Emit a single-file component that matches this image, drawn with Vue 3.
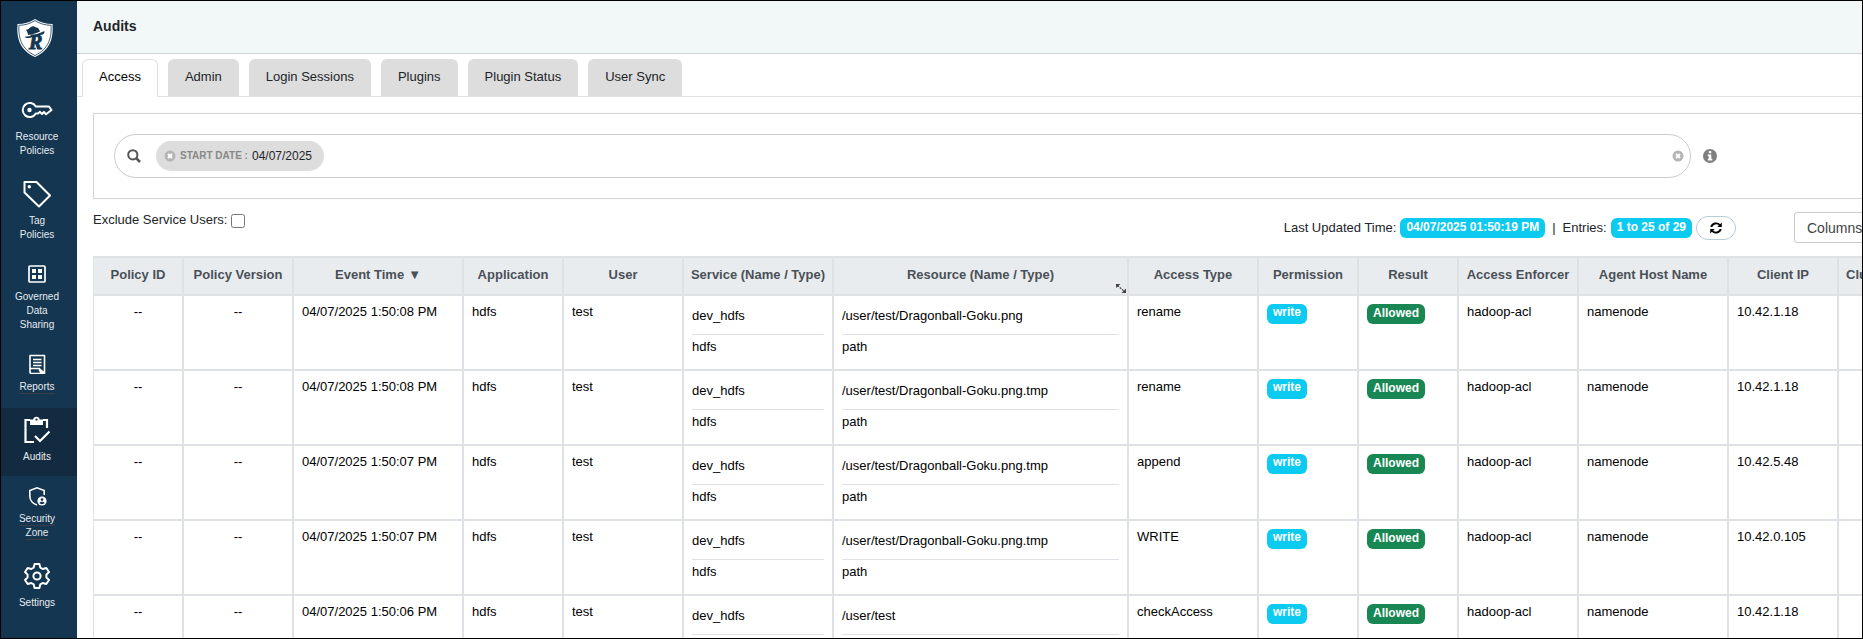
<script setup>
import { ref } from 'vue'

const tabs = ['Access', 'Admin', 'Login Sessions', 'Plugins', 'Plugin Status', 'User Sync']
const activeTab = ref('Access')
const excludeUsers = ref(false)
const query = ref('')

const nav = [
  { icon: 'key', lines: ['Resource', 'Policies'] },
  { icon: 'tag', lines: ['Tag', 'Policies'] },
  { icon: 'grid', lines: ['Governed', 'Data', 'Sharing'] },
  { icon: 'report', lines: ['Reports'], marked: true },
  { icon: 'audit', lines: ['Audits'], active: true },
  { icon: 'shield', lines: ['Security', 'Zone'], marked: true },
  { icon: 'gear', lines: ['Settings'] }
]

const columns = [
  { label: 'Policy ID', width: 90 },
  { label: 'Policy Version', width: 110 },
  { label: 'Event Time', width: 170, sorted: true },
  { label: 'Application', width: 100 },
  { label: 'User', width: 120 },
  { label: 'Service (Name / Type)', width: 150 },
  { label: 'Resource (Name / Type)', width: 295, resizing: true },
  { label: 'Access Type', width: 130 },
  { label: 'Permission', width: 100 },
  { label: 'Result', width: 100 },
  { label: 'Access Enforcer', width: 120 },
  { label: 'Agent Host Name', width: 150 },
  { label: 'Client IP', width: 110 },
  { label: 'Cluster Name', width: 100 }
]

const rows = [
  { time: '04/07/2025 1:50:08 PM', resource: '/user/test/Dragonball-Goku.png', access: 'rename', ip: '10.42.1.18' },
  { time: '04/07/2025 1:50:08 PM', resource: '/user/test/Dragonball-Goku.png.tmp', access: 'rename', ip: '10.42.1.18' },
  { time: '04/07/2025 1:50:07 PM', resource: '/user/test/Dragonball-Goku.png.tmp', access: 'append', ip: '10.42.5.48' },
  { time: '04/07/2025 1:50:07 PM', resource: '/user/test/Dragonball-Goku.png.tmp', access: 'WRITE', ip: '10.42.0.105' },
  { time: '04/07/2025 1:50:06 PM', resource: '/user/test', access: 'checkAccess', ip: '10.42.1.18' }
]
</script>

<template>
  <div class="app">
    <aside class="sidebar">
      <a class="logo" href="#" aria-label="Ranger">
        <svg width="38" height="40" viewBox="0 0 38 40">
          <path d="M19 1C14 4.500 8 6 1.500 6C0.500 21 4 32 19 39C34 32 37.500 21 36.500 6C30 6 24 4.500 19 1Z" fill="#fff" />
          <path d="M19 2.600C14 5.800 9 7.200 2.900 7.300C2.300 20.500 5.500 30.800 19 37.500C32.500 30.800 35.700 20.500 35.100 7.300C29 7.200 24 5.800 19 2.600Z" fill="none" stroke="#143651" stroke-width=".8" />
          <path d="M9 18.500C14 18.500 21 16.500 28.500 13C28.700 15.500 27.500 16.500 25.500 16.800C21 17.200 15 20.500 11 20C9.500 19.800 9 19.200 9 18.500ZM12 17C11.500 14 11 12.500 9.500 11.800C13 11.800 13.500 9 16.500 8.200C18.500 7.800 19.500 9.300 21 9.600C23 10.200 23.300 12 24 13.600C20 15.600 16.500 16.700 12 17Z" fill="#143651" />
          <text x="13" y="31" class="logo-letter">R</text>
        </svg>
      </a>
      <nav class="nav">
        <a v-for="item in nav" :key="item.icon" href="#" class="nav-item" :class="{ active: item.active }">
          <svg v-if="item.icon === 'key'" width="32" height="28" viewBox="0 0 32 28" fill="none" stroke="#fff" stroke-width="2" stroke-linejoin="round">
            <path d="M14.800 10.500A7 7 0 1 0 14.800 17.500H17L19 15.800L21 18L23 16L25 18.300L27.300 16.500L30.500 14L28 10.500Z" />
            <circle cx="8.500" cy="14" r="2.200" fill="#fff" stroke="none" />
          </svg>
          <svg v-else-if="item.icon === 'tag'" width="28" height="28" viewBox="0 0 28 28" fill="none" stroke="#fff" stroke-width="2" stroke-linejoin="round">
            <path d="M1.500 2H13.500L27 15.500L16 26.500L1.500 12.500Z" />
            <circle cx="6.300" cy="6.700" r="1.700" fill="#fff" stroke="none" />
          </svg>
          <svg v-else-if="item.icon === 'grid'" width="20" height="20" viewBox="0 0 20 20">
            <rect x="2" y="2" width="16" height="16" rx="1" fill="none" stroke="#fff" stroke-width="1.700" />
            <path d="M5 5h4v4H5zM11 5h4v4h-4zM5 11h4v4H5zM11 11h4v4h-4z" fill="#fff" />
          </svg>
          <svg v-else-if="item.icon === 'report'" width="20" height="20" viewBox="0 0 20 20" fill="none" stroke="#fff" stroke-width="1.600" stroke-linejoin="round">
            <path d="M3 1.500H17.500V19.500H4.500Q3 19.500 3 18ZM3 14.500H12.500V16Q13.500 19.500 17.300 19M12 14.500L17 18.500" />
            <path d="M6 5.500H14.500M6 8.500H14.500M6 11.500H14.500" />
          </svg>
          <svg v-else-if="item.icon === 'audit'" width="28" height="28" viewBox="0 0 28 28" fill="none" stroke="#fff" stroke-width="2.200">
            <path d="M11 26H2.500V4H7M20 4H24V12" />
            <path d="M12 20L17 25L26.500 15.500" />
            <path d="M7 3.500H10.200A3.300 3.300 0 0 1 16.700 3.500H20V9H7Z" fill="#fff" stroke="none" />
            <circle cx="13.500" cy="3.600" r="1.100" fill="#122b41" stroke="none" />
          </svg>
          <svg v-else-if="item.icon === 'shield'" width="20" height="20" viewBox="0 0 20 20" fill="none" stroke="#fff" stroke-width="1.600">
            <path d="M17.200 9V4.500L10 1.800L2.800 4.500V10C2.800 14.500 6 18 10 19" />
            <circle cx="15" cy="15" r="4.600" fill="#fff" stroke="none" />
            <circle cx="15" cy="13.600" r="1.300" fill="#143651" stroke="none" />
            <path d="M12.400 16.900C13.500 15.300 16.500 15.300 17.600 16.900C16.500 18.400 13.500 18.400 12.400 16.900Z" fill="#143651" stroke="none" />
          </svg>
          <svg v-else width="28" height="28" viewBox="0 0 28 28" fill="none" stroke="#fff" stroke-width="2" stroke-linejoin="round">
            <path d="M11.600 2H16.400L17.300 5.600L19.700 7L23.300 6L26 10L23.400 12.600V15.400L26 18L23.300 22L19.700 21L17.300 22.400L16.400 26H11.600L10.700 22.400L8.300 21L4.700 22L2 18L4.600 15.400V12.600L2 10L4.700 6L8.300 7L10.700 5.600Z" />
            <circle cx="14" cy="14" r="3.600" />
          </svg>
          <span class="nav-label" :class="{ marked: item.marked }">
            <span v-for="line in item.lines" :key="line">{{ line }}</span>
          </span>
        </a>
      </nav>
    </aside>

    <main class="main">
      <header class="header"><h1>Audits</h1></header>

      <div class="tabs" role="tablist">
        <button
          v-for="tab in tabs" :key="tab" type="button" role="tab" class="tab"
          :class="{ active: tab === activeTab }" :aria-selected="tab === activeTab"
          @click="activeTab = tab"
        >{{ tab }}</button>
      </div>

      <div class="content">
        <section class="panel">
          <div class="search">
            <svg class="search-icon" width="14" height="14" viewBox="0 0 14 14" fill="none" stroke="#555" stroke-width="2">
              <circle cx="5.800" cy="5.800" r="4.600" /><path d="M9.200 9.200L13 13" stroke-width="2.600" />
            </svg>
            <span class="chip">
              <button type="button" class="clear" aria-label="Remove filter">
                <svg width="12" height="12" viewBox="0 0 12 12">
                  <circle cx="6" cy="6" r="5.500" fill="#b5b5b5" /><path d="M4 4L8 8M8 4L4 8" stroke="#fff" stroke-width="1.800" />
                </svg>
              </button>
              <span class="chip-key">START DATE :</span>
              <span class="chip-value">04/07/2025</span>
            </span>
            <input v-model="query" class="search-input" type="text" aria-label="Search audits">
            <button type="button" class="clear" aria-label="Clear all filters">
              <svg width="12" height="12" viewBox="0 0 12 12">
                <circle cx="6" cy="6" r="5.500" fill="#b5b5b5" /><path d="M4 4L8 8M8 4L4 8" stroke="#fff" stroke-width="1.800" />
              </svg>
            </button>
          </div>
          <button type="button" class="info" aria-label="Search help">
            <svg width="14" height="14" viewBox="0 0 14 14">
              <circle cx="7" cy="7" r="7" fill="#808080" />
              <path d="M5.800 2H8.300V4.300H5.800ZM4.800 5.500H8.300V9.800H9.300V11.500H4.800V9.800H5.800V7.200H4.800Z" fill="#fff" />
            </svg>
          </button>
        </section>

        <div class="toolbar">
          <label class="exclude">Exclude Service Users:<input v-model="excludeUsers" type="checkbox"></label>
          <div class="status">
            <span>Last Updated Time:</span>
            <span class="badge info-badge">04/07/2025 01:50:19 PM</span>
            <span class="divider">|</span>
            <span>Entries:</span>
            <span class="badge info-badge">1 to 25 of 29</span>
            <button type="button" class="refresh" aria-label="Refresh">
              <svg width="12" height="12" viewBox="0 0 12 12" fill="none" stroke="#000" stroke-width="1.900">
                <path d="M1.200 5A5 5 0 0 1 9.800 3.200M10.800 7A5 5 0 0 1 2.200 8.800" />
                <path d="M11.800 .500V5H7.300ZM.200 11.500V7H4.700Z" fill="#000" stroke="none" />
              </svg>
            </button>
          </div>
          <button type="button" class="columns">Columns</button>
        </div>

        <table class="grid">
          <colgroup>
            <col v-for="c in columns" :key="c.label" :style="{ width: c.width + 'px' }">
          </colgroup>
          <thead>
            <tr>
              <th v-for="c in columns" :key="c.label" scope="col">
                {{ c.label }}<span v-if="c.sorted" class="sort">▼</span>
                <svg v-if="c.resizing" class="resize" width="10" height="10" viewBox="0 0 10 10">
                  <path d="M0 1H4.500L0 5ZM10 10H5.500L10 5.500Z" fill="#444" />
                  <path d="M1.500 2.500L8.500 8.500" stroke="#444" stroke-width="1.200" stroke-dasharray="2 1" />
                </svg>
              </th>
            </tr>
          </thead>
          <tbody>
            <tr v-for="(row, i) in rows" :key="i">
              <td class="center">--</td>
              <td class="center">--</td>
              <td>{{ row.time }}</td>
              <td>hdfs</td>
              <td>test</td>
              <td><div class="pair-name">dev_hdfs</div><div class="pair-type">hdfs</div></td>
              <td><div class="pair-name">{{ row.resource }}</div><div class="pair-type">path</div></td>
              <td>{{ row.access }}</td>
              <td class="badge-cell"><span class="badge info-badge high">write</span></td>
              <td class="badge-cell"><span class="badge allowed">Allowed</span></td>
              <td>hadoop-acl</td>
              <td>namenode</td>
              <td>{{ row.ip }}</td>
              <td></td>
            </tr>
          </tbody>
        </table>
      </div>
    </main>
  </div>
</template>

<style>
body {
  overflow: hidden;
}
</style>

<style scoped>
.app {
  box-sizing: border-box;
  display: flex;
  height: 100vh;
  border: 1px solid #000;
  overflow: hidden;
  background: #fff;
  color: #212529;
  font-family: "Liberation Sans", Arial, sans-serif;
  font-size: 13px;
  line-height: 20px;
}

button {
  font: inherit;
  color: inherit;
  padding: 0;
  border: 0;
  background: none;
}

svg {
  display: block;
  flex: none;
}

.sidebar {
  flex: none;
  width: 76px;
  background: #143651;
}

.logo {
  display: block;
  padding: 17px 0 30px 15px;
}

.logo-letter {
  font: italic bold 20px "Liberation Serif", serif;
  fill: #143651;
  stroke: #143651;
  stroke-width: 1px;
}

.nav {
  display: flex;
  flex-direction: column;
  gap: 2px;
}

.nav-item {
  display: flex;
  flex-direction: column;
  align-items: center;
  gap: 6px;
  padding: 8px 4px 12px 0;
  color: #e6ebef;
  font-size: 10px;
  line-height: 14px;
  text-decoration: none;
}

.nav-item.active {
  background: #122b41;
}

.nav-label {
  display: flex;
  flex-direction: column;
  align-items: center;
}

.marked span {
  text-decoration: underline 1px #3b3c48;
  text-underline-offset: 3px;
}

.main {
  flex: 1;
  min-width: 0;
  overflow: hidden;
}

.header {
  padding: 15px 16px 17px;
  border-bottom: 1px solid #cfd4d8;
  background: #f2f8f8;
}

.header h1 {
  margin: 0;
  font-size: 14px;
  line-height: 20px;
}

.tabs {
  display: flex;
  gap: 10px;
  margin-top: 5px;
  padding-left: 5px;
  border-bottom: 1px solid #dee2e6;
}

.tab {
  padding: 7px 16px 9px;
  border: 1px solid #ddd;
  border-bottom: 0;
  border-radius: 6px 6px 0 0;
  background: #ddd;
}

.tab.active {
  margin-bottom: -1px;
  padding-bottom: 10px;
  border-color: #dee2e6;
  background: #fff;
  color: #000;
}

.content {
  width: max-content;
  padding: 16px;
}

.panel {
  display: flex;
  align-items: center;
  gap: 12px;
  padding: 20px 221px 20px 20px;
  border: 1px solid #d3d3d3;
}

.search {
  flex: 1;
  display: flex;
  align-items: center;
  padding: 6px 6px 6px 12px;
  border: 1px solid #ccc;
  border-radius: 22px;
}

.chip {
  display: flex;
  align-items: center;
  height: 30px;
  margin-left: 15px;
  padding: 0 12px 0 8px;
  border-radius: 15px;
  background: #ddd;
  font-size: 12px;
}

.chip .clear {
  margin-right: 4px;
}

.chip-key {
  margin-right: 4px;
  color: #888;
  font-size: 10px;
  font-weight: bold;
}

.search-input {
  flex: 1;
  min-width: 0;
  height: 30px;
  margin-left: 8px;
  padding: 0;
  border: 0;
  outline: 0;
  background: none;
  font: inherit;
}

.toolbar {
  display: flex;
  align-items: flex-start;
  padding: 13px 0;
}

.exclude {
  display: flex;
  align-items: center;
  gap: 4px;
  margin-top: -2px;
}

.exclude input {
  width: 14px;
  height: 14px;
  margin: 2px 0 0;
}

.status {
  display: flex;
  align-items: center;
  gap: 4px;
  height: 31px;
  margin-left: auto;
}

.divider {
  margin: 0 3px;
}

.badge {
  display: inline-block;
  padding: 3px 6px 5px;
  border-radius: 6px;
  color: #fff;
  font-size: 12px;
  font-weight: bold;
  line-height: 12px;
  white-space: nowrap;
}

.info-badge {
  background: #0dcaf0;
}

.high {
  padding: 2px 6px 6px;
}

.allowed {
  background: #198754;
}

.refresh {
  display: flex;
  align-items: center;
  justify-content: center;
  width: 40px;
  height: 24px;
  border: 1px solid #b9cbd6;
  border-radius: 12px;
}

.columns {
  width: 145px;
  height: 31px;
  margin-left: 58px;
  padding-left: 12px;
  border: 1px solid #ccc;
  border-radius: 3px;
  color: #444;
  font-size: 14px;
  text-align: left;
}

.grid {
  table-layout: fixed;
  width: 1846px;
  border-collapse: separate;
  border-spacing: 0;
  border-top: 2px solid #dee2e6;
  border-left: 1px solid #dee2e6;
  color: #000;
}

th,
td {
  padding: 6px 8px;
  border-right: 2px solid #dee2e6;
  border-bottom: 2px solid #dee2e6;
  vertical-align: top;
  text-align: left;
  white-space: nowrap;
}

th {
  position: relative;
  padding: 7px 0 9px;
  background: #e9ecef;
  color: #495057;
  text-align: center;
}

td {
  box-sizing: border-box;
  height: 75px;
}

.center {
  text-align: center;
}

.sort {
  margin-left: 4px;
}

.resize {
  position: absolute;
  right: 1px;
  bottom: 1px;
}

.pair-name {
  padding: 4px 0 8px;
  border-bottom: 1px solid #dee2e6;
}

.pair-type {
  padding-top: 2px;
}

.badge-cell {
  padding-top: 8px;
  line-height: 12px;
}
</style>
